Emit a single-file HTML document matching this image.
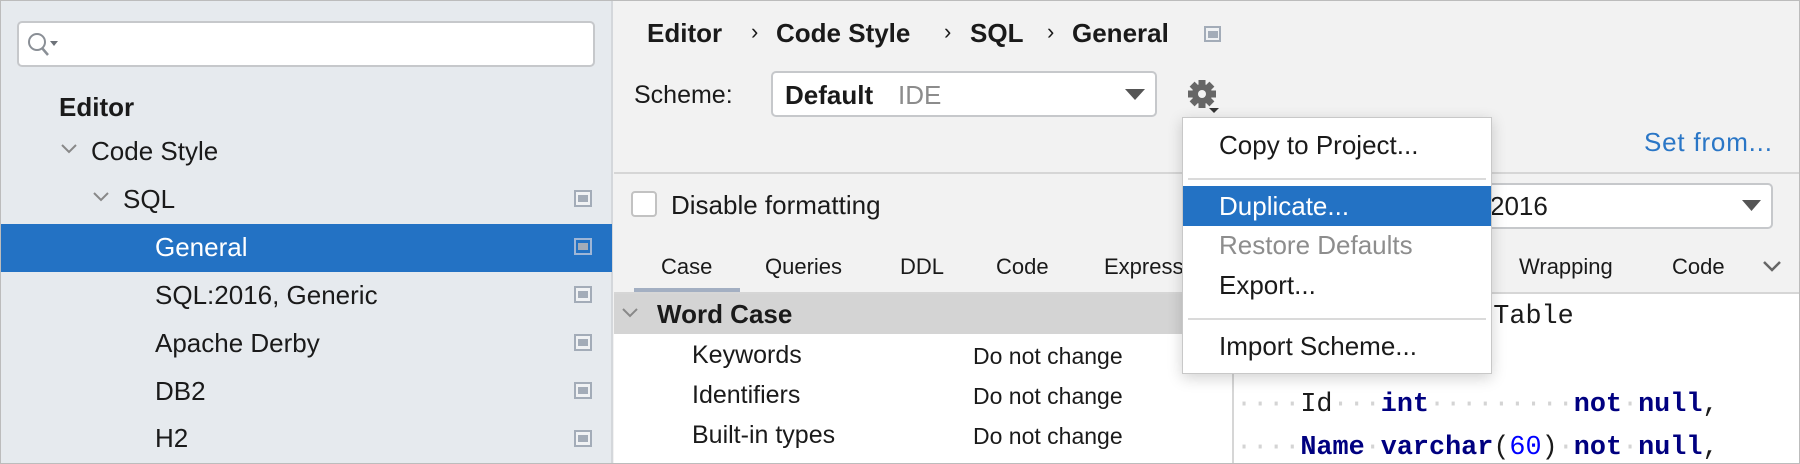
<!DOCTYPE html>
<html><head><meta charset="utf-8"><style>
*{margin:0;padding:0;box-sizing:border-box}
body{width:1800px;height:464px;overflow:hidden;position:relative;font-family:"Liberation Sans",sans-serif;color:#1a1a1a;background:#f2f2f2}
.a{position:absolute;white-space:nowrap;line-height:30px;height:30px}
.t{font-size:25px}
.b{font-weight:bold}
.ic{position:absolute;width:18px;height:17px;border:2px solid #a3acb8;background:#f0f2f4}
.ic:after{content:"";position:absolute;left:2px;top:3px;width:10px;height:7px;background:#a3acb8}
.mono{font-family:"Liberation Mono",monospace;font-size:26.8px;position:absolute;white-space:pre;line-height:32px}
.d{color:#d4d4d4}
.k{color:#000080;font-weight:bold}
</style></head><body>
<div style="position:absolute;left:0;top:0;width:613px;height:464px;background:#e6eaee;border-right:2px solid #d4d7db"></div>
<div style="position:absolute;left:17px;top:21px;width:578px;height:46px;background:#fff;border:2px solid #c6c8cb;border-radius:5px"></div>
<svg style="position:absolute;left:26px;top:31px" width="34" height="28" viewBox="0 0 34 28"><circle cx="11" cy="11" r="8" fill="none" stroke="#8a8f96" stroke-width="2"/><path d="M16 17l6 7" stroke="#8a8f96" stroke-width="2.5"/><path d="M24 10h8l-4 5z" fill="#6d7279"/></svg>
<div class="a t b" style="left:59px;top:92px;font-size:26px">Editor</div>
<svg style="position:absolute;left:60px;top:143px" width="18" height="12"><path d="M2 2l7 7 7-7" fill="none" stroke="#888" stroke-width="2"/></svg>
<div class="a t" style="left:91px;top:136px;font-size:26px">Code Style</div>
<svg style="position:absolute;left:92px;top:191px" width="18" height="12"><path d="M2 2l7 7 7-7" fill="none" stroke="#888" stroke-width="2"/></svg>
<div class="a t" style="left:123px;top:184px;font-size:26px">SQL</div>
<div class="ic" style="left:574px;top:190px"></div>
<div style="position:absolute;left:1px;top:224px;width:611px;height:48px;background:#2372c4"></div>
<div class="a t" style="left:155px;top:232px;color:#fff;font-size:26px">General</div>
<div class="ic" style="left:574px;top:238px;border-color:#9fb6d6;background:#2372c4"></div>
<div class="a t" style="left:155px;top:280px;font-size:26px">SQL:2016, Generic</div>
<div class="ic" style="left:574px;top:286px"></div>
<div class="a t" style="left:155px;top:328px;font-size:26px">Apache Derby</div>
<div class="ic" style="left:574px;top:334px"></div>
<div class="a t" style="left:155px;top:376px;font-size:26px">DB2</div>
<div class="ic" style="left:574px;top:382px"></div>
<div class="a t" style="left:155px;top:423px;font-size:26px">H2</div>
<div class="ic" style="left:574px;top:430px"></div>

<div class="a b" style="left:647px;top:18px;font-size:26px">Editor</div>
<div class="a" style="left:751px;top:17px;font-size:22px">›</div>
<div class="a b" style="left:776px;top:18px;font-size:26px">Code Style</div>
<div class="a" style="left:944px;top:17px;font-size:22px">›</div>
<div class="a b" style="left:970px;top:18px;font-size:26px">SQL</div>
<div class="a" style="left:1047px;top:17px;font-size:22px">›</div>
<div class="a b" style="left:1072px;top:18px;font-size:26px">General</div>
<div class="ic" style="left:1204px;top:26px;width:17px;height:16px"></div>
<div class="a t" style="left:634px;top:80px">Scheme:</div>
<div style="position:absolute;left:771px;top:71px;width:386px;height:46px;background:#fff;border:2px solid #c6c8cb;border-radius:5px"></div>
<div class="a b" style="left:785px;top:80px;font-size:26px">Default</div>
<div class="a" style="left:898px;top:80px;font-size:26px;color:#8c8c8c">IDE</div>
<svg style="position:absolute;left:1125px;top:89px" width="20" height="11"><path d="M0 0h20l-10 11z" fill="#555"/></svg>
<svg style="position:absolute;left:1188px;top:80px" width="34" height="34" viewBox="0 0 34 34"><g transform="translate(14 14)" fill="#666"><circle r="10"/><rect x="-3.5" y="-14" width="7" height="28"/><rect x="-3.5" y="-14" width="7" height="28" transform="rotate(45)"/><rect x="-3.5" y="-14" width="7" height="28" transform="rotate(90)"/><rect x="-3.5" y="-14" width="7" height="28" transform="rotate(135)"/><circle r="4" fill="#f2f2f2"/></g><path d="M21 28h10l-5 5z" fill="#333"/></svg>
<div class="a t" style="left:1644px;top:127px;color:#2a76c6;font-size:26px;letter-spacing:0.8px">Set from...</div>
<div style="position:absolute;left:614px;top:172px;width:1186px;height:2px;background:#d6d6d6"></div>

<div style="position:absolute;left:631px;top:191px;width:26px;height:26px;background:#fff;border:2px solid #c2c2c2;border-radius:4px"></div>
<div class="a t" style="left:671px;top:190px;font-size:26px">Disable formatting</div>
<div style="position:absolute;left:1300px;top:183px;width:473px;height:46px;background:#fff;border:2px solid #c6c8cb;border-radius:5px"></div>
<div class="a" style="left:1490px;top:191px;font-size:26px">2016</div>
<svg style="position:absolute;left:1742px;top:200px" width="19" height="11"><path d="M0 0h19l-9.5 11z" fill="#555"/></svg>

<div class="a" style="left:661px;top:252px;font-size:22px">Case</div>
<div class="a" style="left:765px;top:252px;font-size:22px">Queries</div>
<div class="a" style="left:900px;top:252px;font-size:22px">DDL</div>
<div class="a" style="left:996px;top:252px;font-size:22px">Code</div>
<div class="a" style="left:1104px;top:252px;font-size:22px">Expressions</div>
<div class="a" style="left:1519px;top:252px;font-size:22px">Wrapping</div>
<div style="position:absolute;left:1672px;top:252px;width:52px;overflow:hidden" class="a"><span style="font-size:22px">Code</span></div>
<svg style="position:absolute;left:1762px;top:260px" width="20" height="13"><path d="M2 2l8 8 8-8" fill="none" stroke="#666" stroke-width="2.5"/></svg>
<div style="position:absolute;left:634px;top:288px;width:106px;height:5px;background:#a3afc2"></div>
<div style="position:absolute;left:614px;top:292px;width:1186px;height:2px;background:#d6d6d6"></div>

<div style="position:absolute;left:614px;top:294px;width:618px;height:40px;background:#d4d4d4"></div>
<svg style="position:absolute;left:621px;top:307px" width="18" height="12"><path d="M2 2l7 7 7-7" fill="none" stroke="#888" stroke-width="2"/></svg>
<div class="a b" style="left:657px;top:299px;font-size:26px">Word Case</div>
<div style="position:absolute;left:614px;top:334px;width:618px;height:130px;background:#fff"></div>
<div class="a t" style="left:692px;top:340px">Keywords</div>
<div class="a t" style="left:692px;top:380px">Identifiers</div>
<div class="a t" style="left:692px;top:420px">Built-in types</div>
<div class="a" style="left:973px;top:341px;font-size:23px">Do not change</div>
<div class="a" style="left:973px;top:381px;font-size:23px">Do not change</div>
<div class="a" style="left:973px;top:421px;font-size:23px">Do not change</div>

<div style="position:absolute;left:1232px;top:294px;width:568px;height:170px;background:#fff;border-left:2px solid #d6d6d6"></div>
<div class="mono" style="left:1236px;top:301px">                Table</div>
<div class="mono" style="left:1236px;top:389px"><span class="d">····</span>Id<span class="d">···</span><span class="k">int</span><span class="d">·········</span><span class="k">not</span><span class="d">·</span><span class="k">null</span>,</div>
<div class="mono" style="left:1236px;top:432px"><span class="d">····</span><span class="k">Name</span><span class="d">·</span><span class="k">varchar</span>(<span style="color:#0000ff">60</span>)<span class="d">·</span><span class="k">not</span><span class="d">·</span><span class="k">null</span>,</div>

<div style="position:absolute;left:1182px;top:117px;width:310px;height:257px;background:#fff;border:1px solid #c8c8c8;box-shadow:0 4px 14px rgba(0,0,0,.18)"></div>
<div class="a" style="left:1219px;top:130px;font-size:26px">Copy to Project...</div>
<div style="position:absolute;left:1188px;top:178px;width:298px;height:2px;background:#dadada"></div>
<div style="position:absolute;left:1183px;top:186px;width:308px;height:40px;background:#2372c4"></div>
<div class="a" style="left:1219px;top:191px;font-size:26px;color:#fff">Duplicate...</div>
<div class="a" style="left:1219px;top:230px;font-size:26px;color:#8d8d8d">Restore Defaults</div>
<div class="a" style="left:1219px;top:270px;font-size:26px">Export...</div>
<div style="position:absolute;left:1188px;top:318px;width:298px;height:2px;background:#dadada"></div>
<div class="a" style="left:1219px;top:331px;font-size:26px">Import Scheme...</div>

<div style="position:absolute;left:0;top:0;width:1800px;height:464px;border:1px solid #bcbcbc;pointer-events:none"></div>
</body></html>
